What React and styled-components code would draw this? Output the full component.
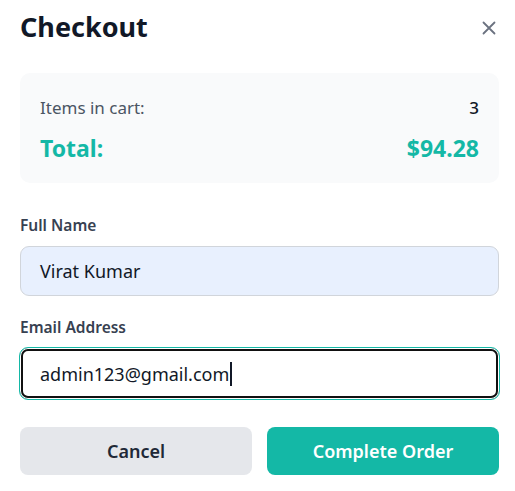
import React from "react";
import styled, { createGlobalStyle } from "styled-components";

const Global = createGlobalStyle`
  html, body { margin: 0; padding: 0; background: #fff; }
  body { font-family: "Noto Sans", "Open Sans", sans-serif; }
  * { box-sizing: border-box; }
`;

const Dialog = styled.div`
  width: 515px;
  padding: 10px 16px 16px 20px;
  display: flex;
  flex-direction: column;
`;

const Header = styled.div`
  display: flex;
  justify-content: space-between;
  align-items: center;
  height: 34px;
`;

const Title = styled.h2`
  margin: 0;
  font-size: 27px;
  font-weight: 700;
  color: #111827;
  line-height: 34px;
`;

const Close = styled.button`
  border: 0;
  background: none;
  padding: 0;
  width: 20px;
  height: 20px;
  display: flex;
  align-items: center;
  justify-content: center;
  color: #6b7280;
  margin-top: 2px;
`;

const Summary = styled.div`
  margin-top: 29px;
  width: 479px;
  background: #f9fafb;
  border-radius: 10px;
  padding: 22px 20px 19px;
  display: flex;
  flex-direction: column;
  gap: 11px;
`;

const Row = styled.div`
  display: flex;
  justify-content: space-between;
  align-items: baseline;
  color: ${(p) => (p.$total ? "#14b8a6" : "#4b5563")};
  font-size: ${(p) => (p.$total ? "23px" : "17px")};
  font-weight: ${(p) => (p.$total ? 700 : 400)};
  line-height: ${(p) => (p.$total ? "32px" : "26px")};
`;

const Value = styled.span`
  color: ${(p) => p.$color || "inherit"};
  font-weight: ${(p) => p.$weight || "inherit"};
`;

const Field = styled.div`
  width: 479px;
  display: flex;
  flex-direction: column;
  margin-top: ${(p) => p.$mt || "0"};
`;

const Label = styled.label`
  font-size: 15.5px;
  font-weight: 600;
  color: #374151;
  line-height: 20px;
  margin-bottom: 11px;
`;

const InputText = styled.div`
  display: flex;
  align-items: center;
  width: ${(p) => (p.$focused ? "481px" : "479px")};
  margin-left: ${(p) => (p.$focused ? "-1px" : "0")};
  margin-top: ${(p) => (p.$focused ? "-1px" : "0")};
  height: ${(p) => (p.$focused ? "53px" : "50px")};
  border-radius: 9px;
  border: 1px solid ${(p) => (p.$focused ? "#14b8a6" : "#d1d5db")};
  background: ${(p) => (p.$autofill ? "#e8f0fe" : "#fff")};
  box-shadow: ${(p) =>
    p.$focused ? "inset 0 0 0 1px #fff, inset 0 0 0 3px #111" : "none"};
  padding: 0 ${(p) => (p.$focused ? "20px" : "19px")};
  font-size: 18px;
  color: #111827;
`;

const Caret = styled.span`
  display: inline-block;
  width: 2px;
  height: 24px;
  background: #111827;
  margin-left: 1px;
`;

const Buttons = styled.div`
  margin-top: 27px;
  width: 479px;
  display: grid;
  grid-template-columns: 1fr 1fr;
  gap: 15px;
`;

const Button = styled.button`
  height: 48px;
  border: 0;
  border-radius: 8px;
  font-family: inherit;
  font-size: 18px;
  font-weight: 600;
  background: ${(p) => (p.$primary ? "#14b8a6" : "#e5e7eb")};
  color: ${(p) => (p.$primary ? "#fff" : "#1f2937")};
`;

export default function App() {
  return (
    <>
      <Global />
      <Dialog>
        <Header>
          <Title>Checkout</Title>
          <Close aria-label="Close">
            <svg width="14" height="14" viewBox="0 0 14 14" fill="none" stroke="currentColor" strokeWidth="1.8" strokeLinecap="round">
              <path d="M1.5 1.5 L12.5 12.5 M12.5 1.5 L1.5 12.5" />
            </svg>
          </Close>
        </Header>
        <Summary>
          <Row>
            <span>Items in cart:</span>
            <Value $color="#111827" $weight={500}>3</Value>
          </Row>
          <Row $total>
            <span>Total:</span>
            <span>$94.28</span>
          </Row>
        </Summary>
        <Field $mt="32px">
          <Label>Full Name</Label>
          <InputText $autofill>Virat Kumar</InputText>
        </Field>
        <Field $mt="21px">
          <Label>Email Address</Label>
          <InputText $focused>
            admin123@gmail.com
            <Caret />
          </InputText>
        </Field>
        <Buttons>
          <Button>Cancel</Button>
          <Button $primary>Complete Order</Button>
        </Buttons>
      </Dialog>
    </>
  );
}
